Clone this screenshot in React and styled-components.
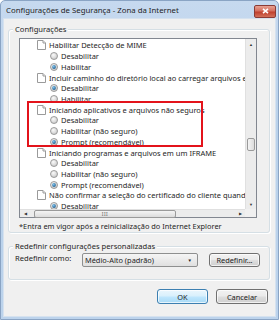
import React from 'react'
import styled, { createGlobalStyle } from 'styled-components'

const GlobalStyle = createGlobalStyle`
  html, body {
    margin: 0;
    padding: 0;
    background: #fff;
  }
  body {
    font-family: 'Noto Sans', 'Open Sans', sans-serif;
    font-size: 7.6px;
    color: #1e1e1e;
  }
`

const items = [
  { type: 'head', label: 'Habilitar Detecção de MIME' },
  { type: 'radio', label: 'Desabilitar' },
  { type: 'radio', label: 'Habilitar', checked: true },
  { type: 'head', label: 'Incluir caminho do diretório local ao carregar arquivos em um servidor' },
  { type: 'radio', label: 'Desabilitar', checked: true },
  { type: 'radio', label: 'Habilitar' },
  { type: 'head', label: 'Iniciando aplicativos e arquivos não seguros' },
  { type: 'radio', label: 'Desabilitar' },
  { type: 'radio', label: 'Habilitar (não seguro)' },
  { type: 'radio', label: 'Prompt (recomendável)', checked: true },
  { type: 'head', label: 'Iniciando programas e arquivos em um IFRAME' },
  { type: 'radio', label: 'Desabilitar' },
  { type: 'radio', label: 'Habilitar (não seguro)' },
  { type: 'radio', label: 'Prompt (recomendável)', checked: true },
  { type: 'head', label: 'Não confirmar a seleção do certificado do cliente quando existir apenas um' },
  { type: 'radio', label: 'Desabilitar', checked: true },
]

const DocIcon = () => (
  <IconBox>
    <svg width='9' height='10' viewBox='0 0 9 10'>
      <path d='M0.5 0.5 H6 L8.5 3 V9.5 H0.5 Z' fill='#fff' stroke='#9a9a9a' />
      <path d='M6 0.5 V3 H8.5' fill='#f0f0f0' stroke='#9a9a9a' />
    </svg>
  </IconBox>
)

const Radio = ({ checked }) => (
  <IconBox>
    <svg width='8' height='8' viewBox='0 0 8 8'>
      <defs>
        <radialGradient id='rg' cx='0.4' cy='0.35' r='0.7'>
          <stop offset='0' stopColor='#fafafa' />
          <stop offset='1' stopColor='#c8c8c8' />
        </radialGradient>
        <radialGradient id='dot' cx='0.4' cy='0.35' r='0.7'>
          <stop offset='0' stopColor='#7fc3ee' />
          <stop offset='1' stopColor='#1a5a8c' />
        </radialGradient>
      </defs>
      <circle cx='4' cy='4' r='3.5' fill='url(#rg)' stroke='#8a8a8a' strokeWidth='0.8' />
      {checked && <circle cx='4' cy='4' r='1.9' fill='url(#dot)' />}
    </svg>
  </IconBox>
)

const App = () => {
  return (
    <>
      <GlobalStyle />
      <Window>
        <TitleBar>
          <Title>Configurações de Segurança - Zona da Internet</Title>
          <CloseButton>
            <svg width='7' height='6' viewBox='0 0 7 6'>
              <path d='M1 0.8 L6 5.2 M6 0.8 L1 5.2' stroke='#fff' strokeWidth='1.6' />
            </svg>
          </CloseButton>
        </TitleBar>
        <Client>
          <Group>
            <Legend>Configurações</Legend>
            <ListBox>
              <ListArea>
                <ListContent>
                  {items.map((it, i) => (
                    <Row key={i} indent={it.type === 'head' ? 17 : 30}>
                      {it.type === 'head' ? <DocIcon /> : <Radio checked={it.checked} />}
                      <RowText>{it.label}</RowText>
                    </Row>
                  ))}
                </ListContent>
                <Highlight />
              </ListArea>
              <VScroll>
                <Arrow>▲</Arrow>
                <Track>
                  <VThumb />
                </Track>
                <Arrow>▼</Arrow>
              </VScroll>
              <HScroll>
                <Arrow>◀</Arrow>
                <Track>
                  <HThumb>
                    <Grip>III</Grip>
                  </HThumb>
                </Track>
                <Arrow>▶</Arrow>
              </HScroll>
              <Corner />
            </ListBox>
            <Note>*Entra em vigor após a reinicialização do Internet Explorer</Note>
          </Group>
          <Group small>
            <Legend>Redefinir configurações personalizadas</Legend>
            <ResetRow>
              <Label>Redefinir como:</Label>
              <Select>
                <span>Médio-Alto (padrão)</span>
                <Caret>▼</Caret>
              </Select>
              <Button width={51} spaced>Redefinir...</Button>
            </ResetRow>
          </Group>
          <Footer>
            <Button width={51} primary>OK</Button>
            <Button width={52}>Cancelar</Button>
          </Footer>
        </Client>
      </Window>
    </>
  )
}

const Window = styled.div`
  width: 279px;
  height: 320px;
  box-sizing: border-box;
  background: linear-gradient(180deg, #c6d9ef 0%, #b9d1ea 40%, #bcd3ec 100%);
  border: 1px solid #8aa4c4;
  border-radius: 5px 5px 0 0;
  padding: 0 2px 2px;
  display: flex;
  flex-direction: column;
`

const TitleBar = styled.div`
  height: 17px;
  display: flex;
  align-items: center;
  justify-content: space-between;
  padding: 0 0 0 3px;
`

const Title = styled.div`
  font-size: 7.8px;
  color: #1e1e1e;
  margin-top: 1px;
`

const CloseButton = styled.div`
  width: 20px;
  height: 11px;
  margin-top: 3px;
  border: 1px solid #8a3b36;
  border-radius: 2px;
  background: linear-gradient(180deg, #e8a192 0%, #d46e5e 45%, #c0402e 55%, #d2705a 100%);
  display: flex;
  align-items: center;
  justify-content: center;
`

const Client = styled.div`
  flex: 1;
  background: #f0f0f0;
  border: 1px solid #d6e2ef;
  display: flex;
  flex-direction: column;
  padding: 0 5px 0 4px;
`

const Group = styled.div`
  position: relative;
  margin-top: ${p => (p.small ? 13 : 10)}px;
  border: 1px solid #d5dfe5;
  border-radius: 3px;
  box-shadow: inset 1px 1px 0 #fff, 1px 1px 0 #fff;
  padding: ${p => (p.small ? '6px 6px 12px 6px' : '8px 12px 1px 10px')};
`

const Legend = styled.div`
  position: absolute;
  left: 4px;
  top: -6px;
  padding: 0 2px;
  background: #f0f0f0;
  font-size: 7.6px;
  line-height: 10px;
`

const ListBox = styled.div`
  display: grid;
  grid-template-columns: 1fr 11px;
  grid-template-rows: 170px 8px;
  border: 1px solid #828790;
  background: #fff;
  height: 180px;
  box-sizing: border-box;
`

const ListArea = styled.div`
  position: relative;
  overflow: hidden;
`

const ListContent = styled.div`
  padding-top: 1px;
`

const Row = styled.div`
  display: flex;
  align-items: center;
  gap: 3px;
  height: 10.73px;
  padding-left: ${p => p.indent}px;
  white-space: nowrap;
`

const IconBox = styled.span`
  flex: 0 0 auto;
  display: flex;
`

const RowText = styled.span`
  font-size: 7.5px;
  line-height: 10px;
`

const Highlight = styled.div`
  position: absolute;
  left: 7px;
  top: 62px;
  width: 172px;
  height: 42px;
  border: 2px solid #e3131b;
`

const VScroll = styled.div`
  background: #ececec;
  border-left: 1px solid #e0e0e0;
  display: flex;
  flex-direction: column;
`

const HScroll = styled.div`
  background: #ececec;
  border-top: 1px solid #e0e0e0;
  display: flex;
`

const Corner = styled.div`
  background: #f0f0f0;
`

const Arrow = styled.div`
  flex: 0 0 10px;
  height: 10px;
  font-size: 4px;
  color: #333;
  display: flex;
  align-items: center;
  justify-content: center;
  align-self: center;
`

const Track = styled.div`
  flex: 1;
  position: relative;
  display: flex;
`

const VThumb = styled.div`
  margin: 89px 1px 0;
  width: 8px;
  height: 11px;
  border: 1px solid #9a9a9a;
  border-radius: 2px;
  background: linear-gradient(90deg, #f4f4f4, #dcdcdc);
`

const HThumb = styled.div`
  margin: 0 0 0 4px;
  width: 140px;
  height: 6px;
  border: 1px solid #9a9a9a;
  border-radius: 2px;
  background: linear-gradient(180deg, #f4f4f4, #dcdcdc);
  display: flex;
  align-items: center;
  justify-content: center;
`

const Grip = styled.span`
  font-size: 5px;
  letter-spacing: 0.5px;
  color: #666;
`

const Note = styled.div`
  font-size: 7.4px;
  line-height: 10px;
  margin-top: 3px;
`

const ResetRow = styled.div`
  display: flex;
  align-items: flex-start;
`

const Label = styled.div`
  width: 67px;
  font-size: 7.6px;
  line-height: 10px;
`

const Select = styled.div`
  width: 116px;
  height: 14px;
  box-sizing: border-box;
  border: 1px solid #8e8f8f;
  border-radius: 2px;
  background: linear-gradient(180deg, #f5f5f5, #e0e0e0);
  display: flex;
  align-items: center;
  justify-content: space-between;
  padding: 0 5px 0 2px;
  font-size: 7.4px;
`

const Caret = styled.span`
  font-size: 4.5px;
  color: #222;
`

const Button = styled.div`
  width: ${p => p.width}px;
  height: ${p => (p.spaced ? 14 : 15)}px;
  box-sizing: border-box;
  border: 1px solid ${p => (p.primary ? '#3c7fb1' : '#707070')};
  border-radius: 3px;
  background: ${p =>
    p.primary
      ? 'linear-gradient(180deg, #eaf6fd 0%, #d9f0fc 45%, #bee6fd 55%, #a7d9f5 100%)'
      : 'linear-gradient(180deg, #f2f2f2 0%, #ebebeb 45%, #dddddd 55%, #cfcfcf 100%)'};
  box-shadow: inset 0 0 0 1px rgba(255, 255, 255, 0.7);
  display: flex;
  align-items: center;
  justify-content: center;
  font-size: 7.4px;
  margin-left: ${p => (p.spaced ? 11 : 0)}px;
`

const Footer = styled.div`
  display: flex;
  justify-content: flex-end;
  gap: 8px;
  margin-top: 9px;
  padding-right: 2px;
`

export default App
